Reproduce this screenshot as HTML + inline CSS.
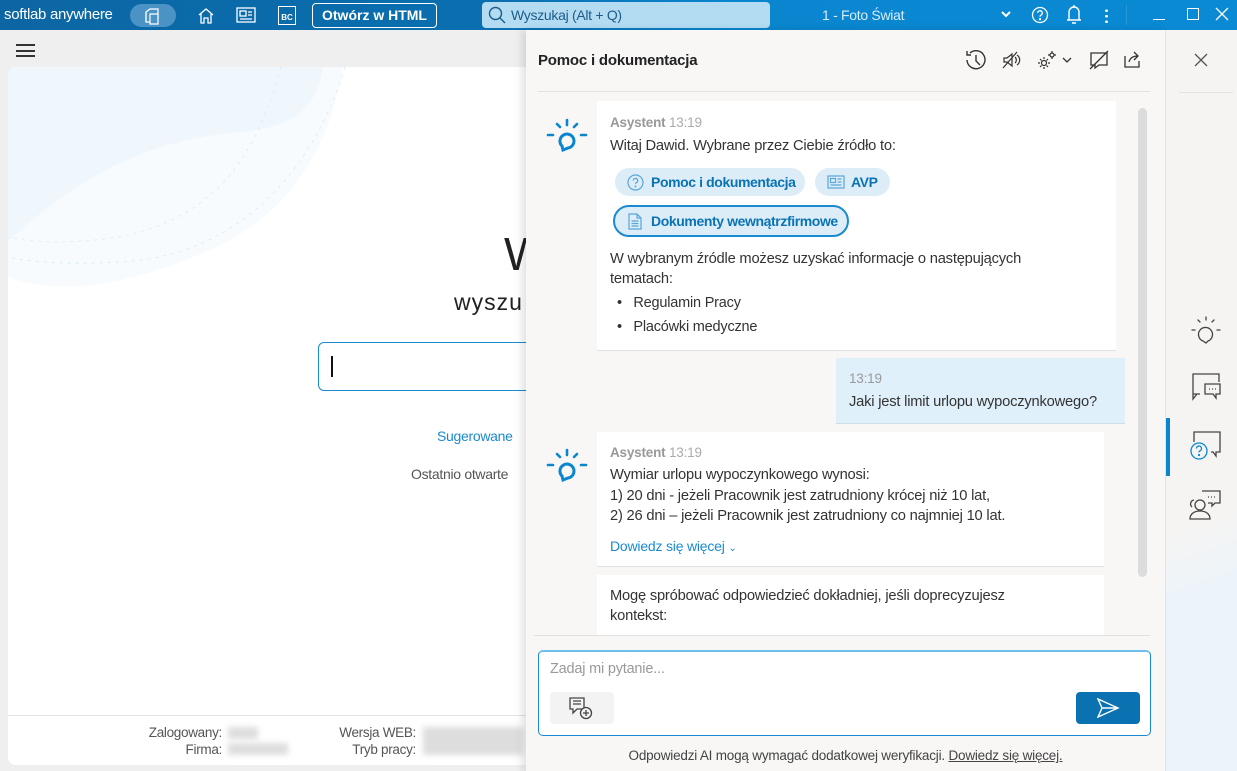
<!DOCTYPE html>
<html><head><meta charset="utf-8"><style>
*{box-sizing:border-box;margin:0;padding:0}
body{width:1237px;height:771px;overflow:hidden;font-family:"Liberation Sans",sans-serif;background:#efefef;position:relative;color:#333}
.abs{position:absolute}
.top{left:0;top:0;width:1237px;height:30px;background:linear-gradient(90deg,#0c66a3 0%,#0a6fb0 40%,#0a86cf 60%,#0a8ad4 100%)}
.top *{color:#fff}
.card{left:8px;top:67px;width:540px;height:698px;background:#fff;border-radius:8px;overflow:hidden}
.panel{left:526px;top:30px;width:639px;height:741px;background:#f8f7f6;box-shadow:-4px 0 8px rgba(0,0,0,.12)}
.rail{left:1165px;top:30px;width:72px;height:741px;background:#f5f4f3;border-left:1px solid #e4e4e4}
.msg{background:#fff;border-bottom:1px solid #e2e2e2}
.t{font-size:14.7px;color:#333;letter-spacing:-0.2px;white-space:nowrap}
.chip{position:absolute;height:28px;border-radius:14px;background:#dcedf8;color:#0a73b5;font-weight:bold;font-size:14px;line-height:28px;padding-left:36px;letter-spacing:-0.4px}
</style></head><body>
<div class="abs top">
 <div class="abs" style="left:4px;top:6px;font-size:15px;letter-spacing:-0.3px">softlab anywhere</div>
 <div class="abs" style="left:130px;top:4px;width:46px;height:23px;border-radius:12px;background:#4a93c4"></div>
 <svg class="abs" style="left:143px;top:6px" width="20" height="20" viewBox="0 0 20 20" fill="none" stroke="#fff" stroke-width="1.2"><path d="M3 6l4-3h8v10l-4 3H3z"/><path d="M7 8h8v10H7z" fill="#4a93c4"/><path d="M3 6v10"/></svg>
 <svg class="abs" style="left:196px;top:6px" width="20" height="20" viewBox="0 0 20 20" fill="none" stroke="#fff" stroke-width="1.3"><path d="M3 9l7-6 7 6M5 8v9h3v-5h4v5h3V8"/></svg>
 <svg class="abs" style="left:236px;top:6px" width="20" height="18" viewBox="0 0 20 18" fill="none" stroke="#fff" stroke-width="1.3"><rect x="1" y="2" width="18" height="14"/><rect x="4" y="5" width="6" height="5"/><path d="M12 6h4M12 9h4M4 13h12"/></svg>
 <div class="abs" style="left:278px;top:6px;width:18px;height:19px;border:1.3px solid #fff;font-size:8px;font-weight:bold;line-height:22px;text-align:center">BC</div>
 <div class="abs" style="left:312px;top:3px;width:125px;height:25px;border:1px solid #fff;border-radius:4px;font-size:14px;font-weight:bold;line-height:23px;text-align:center">Otwórz w HTML</div>
 <div class="abs" style="left:482px;top:2px;width:288px;height:26px;border-radius:4px;background:#b3dcf3"></div>
 <svg class="abs" style="left:488px;top:6px" width="18" height="18" viewBox="0 0 18 18" fill="none" stroke="#1c5d8a" stroke-width="1.4"><circle cx="7.5" cy="7.5" r="6"/><path d="M12 12l5 5"/></svg>
 <div class="abs" style="left:511px;top:7px;font-size:14px;color:#1c5d8a;letter-spacing:-0.3px">Wyszukaj (Alt + Q)</div>
 <div class="abs" style="left:822px;top:7px;font-size:14px;color:#d7ecf8;letter-spacing:-0.3px">1 - Foto Świat</div>
 <svg class="abs" style="left:1001px;top:10px" width="10" height="8" viewBox="0 0 10 8"><path d="M1 2l4 4 4-4" stroke="#fff" stroke-width="2" fill="none"/></svg>
 <svg class="abs" style="left:1031px;top:6px" width="18" height="18" viewBox="0 0 18 18" fill="none" stroke="#fff" stroke-width="1.3"><circle cx="9" cy="9" r="7.5"/><path d="M6.7 7a2.3 2.3 0 1 1 3 2.2c-.6.3-.7.7-.7 1.5"/><circle cx="9" cy="13.2" r=".5" fill="#fff"/></svg>
 <svg class="abs" style="left:1065px;top:4px" width="18" height="22" viewBox="0 0 18 22" fill="none" stroke="#fff" stroke-width="1.4"><path d="M4 16V8a5 5 0 0 1 10 0v8M2 16h14M9 1v2M7 19h4"/></svg>
 <div class="abs" style="left:1105px;top:8px;width:3px;height:15px;background:radial-gradient(circle,#fff 1.3px,transparent 1.5px) 0 0/3px 5.5px"></div>
 <div class="abs" style="left:1126px;top:5px;width:1px;height:20px;background:#2a98d8"></div>
 <div class="abs" style="left:1153px;top:19px;width:12px;height:1.3px;background:#fff"></div>
 <div class="abs" style="left:1187px;top:8px;width:12px;height:12px;border:1.3px solid #fff"></div>
 <svg class="abs" style="left:1215px;top:7px" width="14" height="14" viewBox="0 0 14 14"><path d="M1 1l12 12M13 1L1 13" stroke="#fff" stroke-width="1.3"/></svg>
</div>
<div class="abs" style="left:16px;top:44px;width:19px;height:13px;border-top:2px solid #333;border-bottom:2px solid #333"><div style="margin-top:3.5px;height:2px;background:#333"></div></div>
<div class="abs card">
 <svg class="abs" style="left:0;top:0" width="540" height="260" viewBox="0 0 540 260" fill="none">
  <path d="M0 0h335c-10 60-40 150-150 190C100 225 40 225 0 210z" fill="#f8fbfe"/>
  <path d="M0 0h315c-5 40-30 60-80 65-60 5-140 20-235 110z" fill="#f0f7fc"/>
  <path d="M273 0C250 80 215 150 110 170 60 178 20 175 0 170" stroke="#dcecf7" stroke-dasharray="3 5"/>
  <path d="M337 0C310 90 240 190 110 195 60 198 20 195 0 190" stroke="#dcecf7" stroke-dasharray="3 5"/>
 </svg>
 <div class="abs" style="left:496px;top:160px;font-size:46px;font-weight:300;color:#222">W</div>
 <div class="abs" style="left:446px;top:222px;font-size:23px;color:#222;letter-spacing:1px">wyszu</div>
 <div class="abs" style="left:310px;top:275px;width:260px;height:49px;border:1px solid #1a8ad0;border-radius:6px"><div style="position:absolute;left:12px;top:13px;width:2px;height:21px;background:#111"></div></div>
 <div class="abs" style="left:429px;top:361px;font-size:14px;color:#1a8ad0;letter-spacing:-0.3px">Sugerowane</div>
 <div class="abs" style="left:403px;top:399px;font-size:14px;color:#555;letter-spacing:-0.3px">Ostatnio otwarte</div>
 <div class="abs" style="left:0;top:648px;width:540px;height:1px;background:#e4e4e4"></div>
 <div class="abs" style="left:136px;top:657px;font-size:13.5px;color:#555;text-align:right;width:78px;line-height:17px;letter-spacing:-0.3px">Zalogowany:<br>Firma:</div>
 <div class="abs" style="left:220px;top:660px;width:30px;height:12px;background:#ddd;filter:blur(3px)"></div>
 <div class="abs" style="left:220px;top:676px;width:60px;height:12px;background:#ddd;filter:blur(3px)"></div>
 <div class="abs" style="left:318px;top:657px;font-size:13.5px;color:#555;text-align:right;width:90px;line-height:17px;letter-spacing:-0.3px">Wersja WEB:<br>Tryb pracy:</div>
 <div class="abs" style="left:415px;top:660px;width:100px;height:28px;background:#ddd;filter:blur(3px)"></div>
</div>
<div class="abs panel">
 <div class="abs" style="left:12px;top:22px;font-size:15px;font-weight:bold;color:#222;letter-spacing:-0.2px">Pomoc i dokumentacja</div>
 <svg class="abs" style="left:438px;top:19px" width="24" height="22" viewBox="0 0 24 22" fill="none" stroke="#333" stroke-width="1.4"><path d="M3 11a9 9 0 1 0 3-7M3 2v4h4M12 6v6l4 4"/></svg>
 <svg class="abs" style="left:476px;top:20px" width="20" height="20" viewBox="0 0 20 20" fill="none" stroke="#333" stroke-width="1.2"><path d="M2 8h3l5-4v12l-5-4H2zM13 7a4 4 0 0 1 0 6M15 5a6 6 0 0 1 0 10M1 18L15 2"/></svg>
 <svg class="abs" style="left:510px;top:19px" width="22" height="22" viewBox="0 0 22 22" fill="none" stroke="#333" stroke-width="1.2"><circle cx="8" cy="14" r="2.5"/><path d="M8 8v2M8 18v2M2 14h2M12 14h2M4 10l1.5 1.5M12 10l-1.5 1.5M4 18l1.5-1.5M12 18l-1.5-1.5"/><circle cx="16" cy="6" r="2"/><path d="M16 2v1.5M16 8.5V10M12 6h1.5M18.5 6H20"/></svg>
 <svg class="abs" style="left:536px;top:27px" width="10" height="7" viewBox="0 0 10 7"><path d="M1 1l4 4 4-4" stroke="#333" stroke-width="1.3" fill="none"/></svg>
 <svg class="abs" style="left:563px;top:20px" width="20" height="20" viewBox="0 0 20 20" fill="none" stroke="#333" stroke-width="1.3"><path d="M2 3h16v12h-8l-4 3v-3H2zM1 19L19 1"/></svg>
 <svg class="abs" style="left:596px;top:19px" width="20" height="20" viewBox="0 0 20 20" fill="none" stroke="#333" stroke-width="1.3"><path d="M3 7v11h14v-6M7 13c1-4 4-6 9-6M12 3l4 4-4 4"/></svg>
 <div class="abs" style="left:12px;top:61px;width:612px;height:1px;background:#e2e2e2"></div>
 <svg class="abs" style="left:20px;top:88px" width="42" height="34" viewBox="0 0 42 34" fill="none" stroke="#0a86cf" stroke-width="2.6" stroke-linecap="round"><path d="M21 2v5M11 6l3 3M31 6l-3 3M2 17h5M35 17h5"/><path d="M16 28a7 7 0 1 1 6 2l-5 2z" stroke-width="3"/></svg>
 <div class="abs msg" style="left:71px;top:71px;width:519px;height:250px">
  <div class="abs t" style="left:13px;top:14px;font-size:13.5px;color:#999;font-weight:bold">Asystent <span style="font-weight:normal;color:#aaa">13:19</span></div>
  <div class="abs t" style="left:13px;top:37px">Witaj Dawid. Wybrane przez Ciebie źródło to:</div>
  <div class="chip" style="left:18px;top:67px;width:190px">Pomoc i dokumentacja
   <svg class="abs" style="left:12px;top:6px" width="17" height="17" viewBox="0 0 17 17" fill="none" stroke="#5aa6d8" stroke-width="1.2"><circle cx="8.5" cy="8.5" r="7.5"/><path d="M6.3 6.6a2.2 2.2 0 1 1 2.9 2.1c-.5.3-.7.6-.7 1.4"/><circle cx="8.5" cy="12.5" r=".4"/></svg></div>
  <div class="chip" style="left:218px;top:67px;width:75px">AVP
   <svg class="abs" style="left:12px;top:7px" width="18" height="14" viewBox="0 0 18 14" fill="none" stroke="#5aa6d8" stroke-width="1.2"><rect x="1" y="1" width="16" height="12"/><rect x="3.5" y="3.5" width="5" height="4"/><path d="M10.5 4h4M10.5 7h4M3.5 10h11"/></svg></div>
  <div class="chip" style="left:16px;top:104px;width:236px;height:32px;line-height:29px;border:2px solid #1a8ad0;border-radius:16px">Dokumenty wewnątrzfirmowe
   <svg class="abs" style="left:13px;top:6px" width="14" height="17" viewBox="0 0 14 17" fill="none" stroke="#5aa6d8" stroke-width="1.2"><path d="M1 1h8l4 4v11H1zM9 1v4h4M3.5 8h7M3.5 10.5h7M3.5 13h7"/></svg></div>
  <div class="abs t" style="left:13px;top:148px;line-height:20px">W wybranym źródle możesz uzyskać informacje o następujących<br>tematach:</div>
  <div class="abs t" style="left:20px;top:190px;line-height:24px;font-size:14.5px">•&nbsp;&nbsp;&nbsp;Regulamin Pracy<br>•&nbsp;&nbsp;&nbsp;Placówki medyczne</div>
 </div>
 <div class="abs" style="left:310px;top:328px;width:289px;height:66px;background:#dff0fa;border-bottom:1px solid #d0dde6">
  <div class="abs t" style="left:13px;top:13px;color:#999;font-size:13.5px">13:19</div>
  <div class="abs t" style="left:13px;top:36px">Jaki jest limit urlopu wypoczynkowego?</div>
 </div>
 <svg class="abs" style="left:20px;top:418px" width="42" height="34" viewBox="0 0 42 34" fill="none" stroke="#0a86cf" stroke-width="2.6" stroke-linecap="round"><path d="M21 2v5M11 6l3 3M31 6l-3 3M2 17h5M35 17h5"/><path d="M16 28a7 7 0 1 1 6 2l-5 2z" stroke-width="3"/></svg>
 <div class="abs msg" style="left:71px;top:402px;width:507px;height:135px">
  <div class="abs t" style="left:13px;top:13px;font-size:13.5px;color:#999;font-weight:bold">Asystent <span style="font-weight:normal;color:#aaa">13:19</span></div>
  <div class="abs t" style="left:13px;top:33px;line-height:20.5px">Wymiar urlopu wypoczynkowego wynosi:<br>1) 20 dni - jeżeli Pracownik jest zatrudniony krócej niż 10 lat,<br>2) 26 dni – jeżeli Pracownik jest zatrudniony co najmniej 10 lat.</div>
  <div class="abs t" style="left:13px;top:106px;color:#1a8ad0;font-size:14px">Dowiedz się więcej <span style="font-size:10px">&#8964;</span></div>
 </div>
 <div class="abs" style="left:71px;top:545px;width:507px;height:60px;background:#fff">
  <div class="abs t" style="left:13px;top:11px;line-height:20px">Mogę spróbować odpowiedzieć dokładniej, jeśli doprecyzujesz<br>kontekst:</div>
 </div>
 <div class="abs" style="left:612px;top:78px;width:9px;height:469px;border-radius:5px;background:#dcdcdc"></div>
 <div class="abs" style="left:8px;top:605px;width:616px;height:1px;background:#e0e0e0"></div>
 <div class="abs" style="left:12px;top:620px;width:613px;height:86px;border:1px solid #1a8ad0;border-top:2px solid #6cc0ea;border-radius:5px;background:#fff">
  <div class="abs" style="left:11px;top:9px;font-size:14.5px;color:#999;letter-spacing:-0.2px">Zadaj mi pytanie...</div>
  <div class="abs" style="left:11px;top:40px;width:64px;height:32px;border-radius:4px;background:#f3f3f3">
   <svg class="abs" style="left:19px;top:5px" width="26" height="24" viewBox="0 0 26 24" fill="none" stroke="#444" stroke-width="1.3"><path d="M1 1h14v11H8l-4 4v-4H1zM4 4h8M4 7h8"/><circle cx="17" cy="16" r="5.5" fill="#f3f3f3"/><path d="M17 13v6M14 16h6"/></svg>
  </div>
  <div class="abs" style="left:537px;top:40px;width:64px;height:32px;border-radius:4px;background:#0a72b0">
   <svg class="abs" style="left:20px;top:6px" width="24" height="20" viewBox="0 0 24 20" fill="none" stroke="#fff" stroke-width="1.4"><path d="M2 1l20 9-20 9 4-9zM6 10h16"/></svg>
  </div>
 </div>
 <div class="abs" style="left:0;top:718px;width:639px;text-align:center;font-size:13.5px;color:#444;letter-spacing:-0.2px">Odpowiedzi AI mogą wymagać dodatkowej weryfikacji. <u>Dowiedz się więcej.</u></div>
</div>
<div class="abs rail">
 <svg class="abs" style="left:27px;top:22px" width="16" height="16" viewBox="0 0 16 16"><path d="M2 2l12 12M14 2L2 14" stroke="#555" stroke-width="1.3"/></svg>
 <div class="abs" style="left:13px;top:62px;width:54px;height:1px;background:#e2e2e2"></div>
 <div class="abs" style="left:0;top:480px;width:72px;height:261px;background:linear-gradient(160deg,#f5f4f3 10%,#edf4f9 30%)"></div>
 <svg class="abs" style="left:24px;top:285px" width="32" height="30" viewBox="0 0 32 30" fill="none" stroke="#444" stroke-width="1.3" stroke-linecap="round"><path d="M16 2v3M8 5l2 2M24 5l-2 2M2 15h3M27 15h3"/><path d="M13 26a7 7 0 1 1 5 0l-2 2z"/></svg>
 <svg class="abs" style="left:24px;top:342px" width="32" height="32" viewBox="0 0 32 32" fill="none" stroke="#444" stroke-width="1.3"><path d="M10 22H3V2h26v8M3 22v5l4-5"/><path d="M15 12h15v10h-4v4l-3-4h-8z"/><path d="M19 17h1M22 17h1M25 17h1"/></svg>
 <div class="abs" style="left:0;top:388px;width:4px;height:58px;background:#0a86cf"></div>
 <svg class="abs" style="left:22px;top:400px" width="34" height="34" viewBox="0 0 34 34" fill="none" stroke="#444" stroke-width="1.3"><path d="M6 12V2h26v20h-4v4l-3-4h-2"/><circle cx="11" cy="21" r="8" stroke="#0a86cf" fill="#f5f4f3"/><path d="M8.5 18.5a2.5 2.5 0 1 1 3.3 2.4c-.6.3-.8.6-.8 1.5" stroke="#0a86cf"/><circle cx="11" cy="25" r=".5" stroke="#0a86cf"/></svg>
 <svg class="abs" style="left:22px;top:458px" width="34" height="34" viewBox="0 0 34 34" fill="none" stroke="#444" stroke-width="1.3"><path d="M14 3h18v12h-5l-3 3v-3h-4M20 9h1M23 9h1M26 9h1"/><circle cx="12" cy="17" r="5"/><path d="M2 31c0-5 4-8 10-8s10 3 10 8zM4 19a4 4 0 0 1 2-7"/></svg>
</div>
</body></html>
